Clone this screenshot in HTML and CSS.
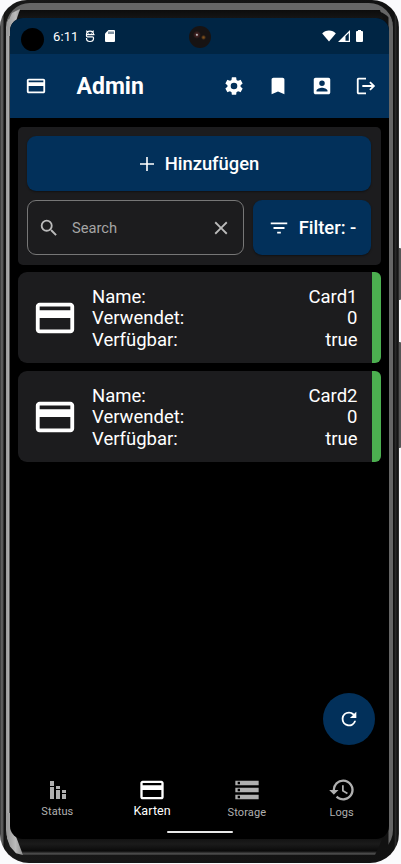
FILE: index.html
```html
<!DOCTYPE html>
<html lang="de">
<head>
<meta charset="utf-8">
<title>Admin</title>
<link rel="stylesheet" href="styles.css">
</head>
<body>
<svg class="defs" aria-hidden="true">
  <symbol id="card" viewBox="0 0 24 24"><path d="M20 4H4c-1.100 0-2 .9-2 2v12c0 1.100.9 2 2 2h16c1.100 0 2-.9 2-2V6c0-1.100-.9-2-2-2zm0 14H4v-6h16v6zm0-10H4V6h16v2z"/></symbol>
</svg>
<div class="device">
  <span class="side-key power"></span><span class="side-key volume"></span>
  <div class="body">
  <div class="bezel">
  <main class="screen">
    <header class="statusbar">
      <i class="cutout"></i>
      <span class="time">6:11</span>
      <svg class="debug" viewBox="0 0 10 13"><path d="M1.500 4.500C1.500 0 8.500 0 8.500 4.500M1 4.600h8.500M2.300 1.800 1.400.6M7.700 1.800 8.600.6M1.500 4.600v1.200q0 1 1 1h5q1 0 1 1v.7c0 4-7 4-7 0V8" fill="none" stroke="currentColor" stroke-width="1.200"/><path d="M3.200 2.800h1v1h-1zM5.800 2.800h1v1h-1z"/></svg>
      <svg class="sd" viewBox="0 0 10 12"><path d="M3.500 0H9q1 0 1 1v10q0 1-1 1H1q-1 0-1-1V3.500z"/><path class="hole" d="M3.500 1.500h1v2.500h-1zM5.500 1.500h1v2.500h-1zM7.500 1.500h1v2.500h-1z"/></svg>
      <i class="lens"></i>
      <svg class="wifi" viewBox="0 0 14 12"><path d="M7 11.500.2 3.400C3-.6 11-.6 13.800 3.400z"/></svg>
      <svg class="signal" viewBox="0 0 12 12"><path fill-rule="evenodd" d="M12 0v12H0zM10.800 3 7.500 6.300v4.500h3.300z"/></svg>
      <svg class="battery" viewBox="0 0 7 12"><path d="M2 0h3v1h1q1 0 1 1v9q0 1-1 1H1q-1 0-1-1V2q0-1 1-1h1z"/></svg>
    </header>
    <nav class="appbar">
      <svg class="i22"><use href="#card"/></svg>
      <h1>Admin</h1>
      <svg class="i22" viewBox="0 0 24 24"><path d="M19.140 12.940c.04-.3.06-.61.06-.94s-.02-.64-.07-.94l2.030-1.580a.49.49 0 0 0 .12-.61l-1.920-3.320a.488.488 0 0 0-.59-.22l-2.390.96a7 7 0 0 0-1.620-.94l-.36-2.540A.484.484 0 0 0 13.920 2.400h-3.840a.484.484 0 0 0-.48.410l-.36 2.540a7 7 0 0 0-1.620.94l-2.390-.96a.488.488 0 0 0-.59.220L2.720 8.870a.49.49 0 0 0 .12.610l2.030 1.580a7 7 0 0 0 0 1.880l-2.030 1.580a.49.49 0 0 0-.12.610l1.920 3.320c.12.220.37.290.59.220l2.390-.96a7 7 0 0 0 1.620.94l.36 2.540c.05.240.24.410.48.410h3.840c.24 0 .44-.17.48-.41l.36-2.540a7 7 0 0 0 1.620-.94l2.390.96c.22.080.47 0 .59-.22l1.920-3.320a.49.49 0 0 0-.12-.61zM12 15.600a3.600 3.600 0 1 1 0-7.200 3.600 3.600 0 0 1 0 7.200z"/></svg>
      <svg class="i22" viewBox="0 0 24 24"><path d="M17 3H7c-1.100 0-2 .9-2 2v16l7-3 7 3V5c0-1.100-.9-2-2-2z"/></svg>
      <svg class="i22" viewBox="0 0 24 24"><path fill-rule="evenodd" d="M5 3h14c1.100 0 2 .9 2 2v14c0 1.100-.9 2-2 2H5c-1.100 0-2-.9-2-2V5c0-1.100.9-2 2-2zm7 3a3 3 0 1 0 0 6 3 3 0 0 0 0-6zm6 12v-1c0-2-4-3.100-6-3.100S6 15 6 17v1z"/></svg>
      <svg class="i22" viewBox="0 0 24 24"><path d="m17 7-1.410 1.410L18.170 11H8v2h10.170l-2.580 2.580L17 17l5-5zM4 5h8V3H4c-1.100 0-2 .9-2 2v14c0 1.100.9 2 2 2h8v-2H4z"/></svg>
    </nav>
    <section class="content">
      <div class="tools">
        <button class="button add"><svg class="plus" viewBox="0 0 14 14"><path d="M6.200 0h1.600v6.200H14v1.600H7.800V14H6.200V7.800H0V6.200h6.200z"/></svg>Hinzufügen</button>
        <div class="row">
          <div class="search">
            <svg class="i22" viewBox="0 0 24 24"><path d="M15.500 14h-.79l-.28-.27A6.470 6.470 0 0 0 16 9.500 6.500 6.500 0 1 0 9.500 16c1.610 0 3.090-.59 4.230-1.570l.27.280v.79l5 4.990L20.490 19zm-6 0a4.500 4.500 0 1 1 0-9 4.500 4.500 0 0 1 0 9z"/></svg>
            <span>Search</span>
            <svg class="i22" viewBox="0 0 24 24"><path d="M19 6.410 17.590 5 12 10.590 6.410 5 5 6.410 10.590 12 5 17.590 6.410 19 12 13.410 17.590 19 19 17.590 13.410 12z"/></svg>
          </div>
          <button class="button filter"><svg class="i22" viewBox="0 0 24 24"><path d="M10 18h4v-2h-4zM3 6v2h18V6zm3 7h12v-2H6z"/></svg>Filter: -</button>
        </div>
      </div>
      <article class="item">
        <svg class="big"><use href="#card"/></svg>
        <dl><dt>Name:</dt><dd>Card1</dd><dt>Verwendet:</dt><dd>0</dd><dt>Verfügbar:</dt><dd>true</dd></dl>
      </article>
      <article class="item">
        <svg class="big"><use href="#card"/></svg>
        <dl><dt>Name:</dt><dd>Card2</dd><dt>Verwendet:</dt><dd>0</dd><dt>Verfügbar:</dt><dd>true</dd></dl>
      </article>
    </section>
    <button class="fab" aria-label="Aktualisieren"><svg class="i22" viewBox="0 0 24 24"><path d="M17.650 6.350A7.960 7.960 0 0 0 12 4a8 8 0 1 0 7.730 10h-2.080A6 6 0 1 1 12 6c1.660 0 3.140.69 4.220 1.780L13 11h7V4z"/></svg></button>
    <footer class="tabs">
      <div class="tab"><svg class="bars" viewBox="0 0 16 18"><path d="M0 0h4v5H0zM0 6h4v12H0zM6 5h4v3H6zM6 9h4v9H6zM12 9h4v3h-4zM12 13h4v5h-4z"/></svg><span>Status</span></div>
      <div class="tab active"><svg class="i28"><use href="#card"/></svg><span>Karten</span></div>
      <div class="tab"><svg class="i28" viewBox="0 0 24 24"><path fill-rule="evenodd" d="M2 20h20v-4H2zm2-3h2v2H4zM2 4v4h20V4zm4 3H4V5h2zm-4 7h20v-4H2zm2-3h2v2H4z"/></svg><span>Storage</span></div>
      <div class="tab"><svg class="i28" viewBox="0 0 24 24"><path d="M13 3a9 9 0 0 0-9 9H1l3.890 3.890.07.140L9 12H6a7 7 0 1 1 2.060 4.940l-1.420 1.420A9 9 0 1 0 13 3zm-1 5v5l4.280 2.540.72-1.210-3.500-2.080V8z"/></svg><span>Logs</span></div>
    </footer>
    <div class="home"></div>
  </main>
  </div>
  </div>
</div>
</body>
</html>
```
FILE: styles.css
```css
* { box-sizing: border-box; }
body { margin: 0; background: #fafafc; color: #fff; font-family: Roboto, sans-serif; }
svg { display: block; fill: currentColor; flex: none; }
button { border: 0; padding: 0; font: inherit; color: inherit; }
.defs { position: absolute; width: 0; height: 0; }
.device { position: relative; width: 401px; height: 864px; overflow: hidden; padding-right: 2px; }
.side-key { position: absolute; right: 0; width: 3px; background: #555; border-radius: 0 1px 1px 0; }
.power { top: 248px; height: 52px; }
.volume { top: 342px; height: 106px; }
.body {
  position: relative; width: 399px; height: 863px; border-radius: 27px 27px 29px 29px; padding: 3px 6px 8px;
  background: linear-gradient(90deg, #222 0, #606060 1px, #555 3px, #111 4px, #181818 6px, #111 394px, #303030 396px, #0b0b0b 397px, #333 399px);
}
.bezel {
  position: relative; height: 852px; width: 387px; border-radius: 24px 24px 25px 25px; padding: 8px 4px 16px;
  background: linear-gradient(90deg, #999 0, #b0b0b0 3px, #000 4px, #111 5px 382px, #666 383px);
  border-top: 7px solid #666;
}
.bezel::before, .bezel::after {
  content: ""; position: absolute; left: 0; right: 0;
}
.bezel::before { top: 0; height: 24px; background: linear-gradient(#0c0c0c, #151515 8px); clip-path: polygon(14px 0, 374px 0, 382px 24px, 4px 24px); }
.bezel::after { bottom: 0; height: 29px; background: linear-gradient(#111 0 12px, #1b1b1b 18px, #0a0a0a 25px, #555 28px, #222); clip-path: polygon(4px 0, 382px 0, 369px 100%, 17px 100%); }
/* light reflections in the rounded corners of the frame */
.body::before, .body::after { content: ""; position: absolute; left: 7px; width: 17px; background: linear-gradient(90deg, #999, #bbb 50%, #888); z-index: 1; }
.body::before { top: 9px; height: 27px; clip-path: polygon(0 100%, 0 55%, 5px 15%, 13px 0, 9px 45%, 3px 100%); }
.body::after { bottom: 8px; height: 42px; clip-path: polygon(0 0, 3px 0, 4px 40%, 9px 56%, 16px 100%, 9px 96%, 3px 80%, 0 60%); }
.screen { z-index: 2; height: 821px; width: 379px; background: #000; border-radius: 13px; overflow: hidden; display: flex; flex-direction: column; position: relative; }
.statusbar { height: 36px; flex: none; background: #002544; display: flex; align-items: center; padding: 0 26px 0 11px; }
.cutout { width: 23px; height: 23px; background: #000; border-radius: 50%; margin-top: 7px; }
.time { font-size: 13px; margin-left: 9px; width: 32px; letter-spacing: .1px; }
.debug { width: 10px; height: 13px; }
.sd { width: 10px; height: 12px; margin-left: 10px; }
.hole { fill: #002544; }
.lens { width: 22px; height: 22px; border-radius: 50%; margin-left: 74px; margin-top: 2px; background: radial-gradient(circle at 36% 40%, #bbb 0 .5px, #422 1.5px, transparent 4px), radial-gradient(circle at 66% 52%, #80501c 0 .5px, transparent 2.500px), #171313; }
.wifi { width: 14px; height: 12px; margin-left: auto; }
.signal { width: 12px; height: 12px; margin-left: 2px; }
.battery { width: 7px; height: 12px; margin-left: 6px; }
.appbar { height: 64px; flex: none; background: #02305a; display: flex; align-items: center; padding: 0 12px 0 15px; gap: 22px; }
.appbar h1 { font-size: 23px; line-height: 30px; font-weight: 700; margin: 1px auto 0 7.500px; }
.i22 { width: 22px; height: 22px; }
.content { padding: 9px 8px; display: flex; flex-direction: column; gap: 8px; }
.tools { height: 138px; margin-bottom: -1px; background: #1c1c1e; border-radius: 5px; padding: 9px 10px 10px 9px; display: flex; flex-direction: column; gap: 9px; }
.button { height: 55px; background: #02305a; border-radius: 9px; display: flex; align-items: center; justify-content: center; font-size: 18.400px; font-weight: 500; box-shadow: 0 1px 2px #0006; }
.add { gap: 11px; padding-left: 1px; }
.plus { width: 14px; height: 14px; }
.row { display: flex; gap: 9px; }
.search { width: 217px; height: 55px; border: 1px solid #777; border-radius: 9px; display: flex; align-items: center; padding: 0 11px 0 10px; color: #bbb; font-size: 14.700px; }
.search span { margin: 0 auto 0 12px; color: #a5a5a5; }
.filter { flex: 1; gap: 9px; }
.item { height: 91px; background: #1c1c1e; border-radius: 9px 6px 6px 9px; overflow: hidden; border-right: 9px solid #4caf50; display: flex; align-items: center; padding: 0 14.500px 0 14px; }
.big { width: 46px; height: 46px; }
.item dl { margin: 3px 0 0 14px; flex: 1; display: grid; grid-template-columns: 1fr auto; font-size: 18.500px; line-height: 21.330px; }
.item dd { margin: 0; text-align: right; }
.fab { position: absolute; left: 313px; top: 675px; width: 52px; height: 52px; border-radius: 50%; background: #02305a; display: grid; place-items: center; }
.tabs { margin-top: auto; height: 52px; display: grid; grid-template-columns: repeat(4, 1fr); margin-bottom: 3px; }
.tab { display: flex; flex-direction: column; align-items: center; color: #b0b0b0; font-size: 11px; line-height: 14px; letter-spacing: .1px; }
.tab svg { margin-bottom: 1.500px; }
.tab .bars { width: 16px; height: 18px; margin: 5px 0 6px 1px; }
.tab.active { color: #fff; font-size: 12.500px; }
.tab.active svg { margin-bottom: 0; }
.i28 { width: 28px; height: 28px; }
.home { width: 66px; height: 2px; background: #e8e8e8; border-radius: 1px; margin: 0 auto 6px; flex: none; }
```
